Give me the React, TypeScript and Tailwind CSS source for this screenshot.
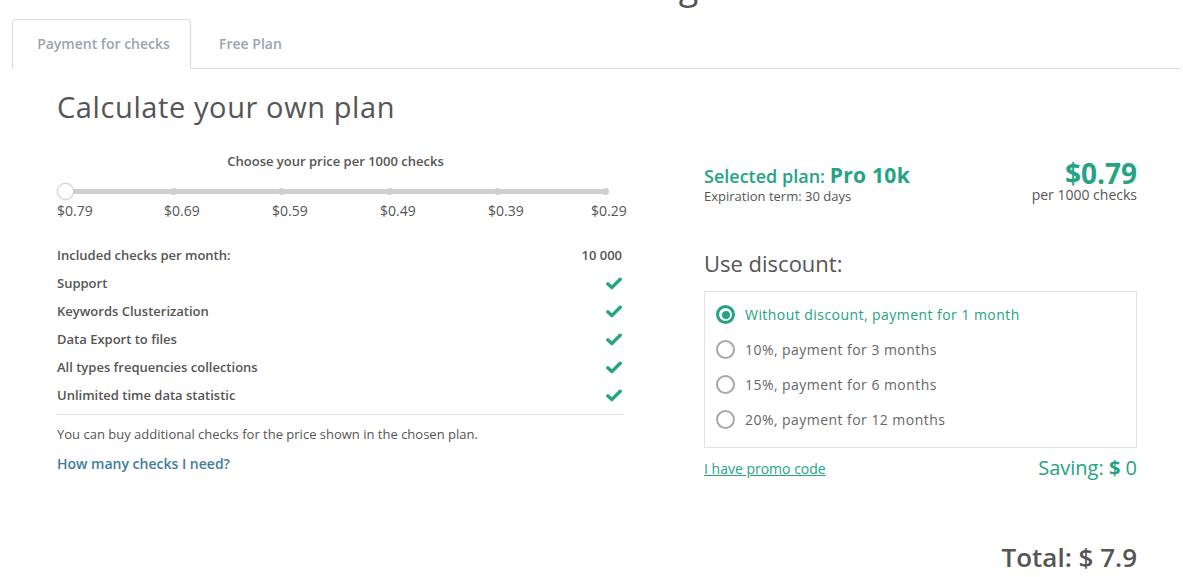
import React from "react";

function Check() {
  return (
    <svg width="16" height="13" viewBox="0 0 16 13" aria-hidden>
      <path d="M1.8 6.8 L5.8 10.6 L14.2 2.2" fill="none" stroke="#27a580" strokeWidth="3.4" strokeLinecap="round" strokeLinejoin="round" />
    </svg>
  );
}

function Radio({ checked }: { checked?: boolean }) {
  if (checked) {
    return (
      <span className="w-[19px] h-[19px] rounded-full border-[3px] border-[#25a383] flex items-center justify-center shrink-0">
        <span className="w-[8px] h-[8px] rounded-full bg-[#25a383]" />
      </span>
    );
  }
  return <span className="w-[19px] h-[19px] rounded-full border-[2.5px] border-[#a8a8a8] shrink-0" />;
}

export default function App() {
  const features = [
    "Support",
    "Keywords Clusterization",
    "Data Export to files",
    "All types frequencies collections",
    "Unlimited time data statistic",
  ];
  const options = [
    "Without discount, payment for 1 month",
    "10%, payment for 3 months",
    "15%, payment for 6 months",
    "20%, payment for 12 months",
  ];
  return (
    <div className="w-[1183px] h-[577px] overflow-hidden bg-white text-[#555]" style={{ fontFamily: '"Open Sans", "Noto Sans", sans-serif' }}>
      <div className="h-[19px] overflow-hidden">
        <div className="pl-[585px] text-[36px] leading-none -mt-[32px] text-[#555]">Pricing</div>
      </div>
      <div className="pl-[12px] pr-[3px]">
        <div className="flex border-b border-[#dcdcdc] h-[50px]">
          <div className="w-[179px] h-[50px] border border-b-0 border-[#dcdcdc] rounded-t-[4px] bg-white flex items-center justify-center pl-[4px] pb-[2px] text-[14px] font-semibold text-[#9aa4b1] -mb-px">
            Payment for checks
          </div>
          <div className="px-[28px] h-[49px] flex items-center text-[14px] font-semibold text-[#9aa4b1]">Free Plan</div>
        </div>
      </div>
      <div className="pl-[57px]">
        <h1 className="text-[29px] leading-none mt-[23px] text-[#555] tracking-[0.6px]">Calculate your own plan</h1>
        <div className="flex mt-[22px]">
          <div className="w-[571px]">
            <div className="text-center text-[13px] font-semibold pr-[14px] leading-[18px] mt-[9px]">Choose your price per 1000 checks</div>
            <div className="relative mt-[13px] h-[16px] w-[557px]">
              <div className="absolute left-[8px] right-[8px] top-[6px] h-[5px] rounded-full bg-[#cfcfcf]" />
              {[116, 224, 332, 440, 548].map((x) => (
                <div key={x} className="absolute top-[5px] w-[7px] h-[7px] rounded-full bg-[#cfcfcf]" style={{ left: x - 3 }} />
              ))}
              <div className="absolute left-0 top-0 w-[17px] h-[17px] rounded-full bg-white border border-[#cfcfcf] shadow-[0_0_2px_rgba(0,0,0,0.15)]" />
            </div>
            <div className="flex mt-[2px] text-[14px] leading-[20px] text-[#555]">
              <span className="w-[107px]">$0.79</span>
              <span className="w-[108px]">$0.69</span>
              <span className="w-[108px]">$0.59</span>
              <span className="w-[108px]">$0.49</span>
              <span className="w-[103px]">$0.39</span>
              <span>$0.29</span>
            </div>
            <div className="w-[566px] mt-[25px]">
              <div className="flex justify-between h-[28px] items-start text-[13px] font-semibold leading-[18px]">
                <span>Included checks per month:</span>
                <span className="pr-[1px]">10 000</span>
              </div>
              {features.map((f) => (
                <div key={f} className="flex justify-between h-[28px] items-start text-[13px] font-semibold leading-[18px]">
                  <span>{f}</span>
                  <span className="pr-[1px] pt-[3px]"><Check /></span>
                </div>
              ))}
              <div className="border-t border-[#e2e2e2]" />
              <div className="text-[13px] leading-[18px] mt-[10px]">You can buy additional checks for the price shown in the chosen plan.</div>
              <div className="text-[14px] font-semibold leading-[20px] mt-[11px] text-[#3f7d9a]">How many checks I need?</div>
            </div>
          </div>
          <div className="ml-[76px] w-[433px]">
            <div className="flex justify-between items-start mt-[19px]">
              <div>
                <div className="text-[#25a383] font-semibold leading-[26px]">
                  <span className="text-[18px]">Selected plan: </span>
                  <span className="text-[21px] font-bold tracking-[0.3px]">Pro 10k</span>
                </div>
                <div className="text-[13px] leading-[16px] -mt-[2px]">Expiration term: 30 days</div>
              </div>
              <div className="text-right">
                <div className="text-[28px] font-bold leading-[24px] text-[#25a383] mt-[-1px]">$0.79</div>
                <div className="text-[14px] leading-[18px] mt-[1px]">per 1000 checks</div>
              </div>
            </div>
            <div className="text-[22px] leading-[30px] mt-[44px]">Use discount:</div>
            <div className="border border-[#e3e3e3] mt-[13px] h-[157px] pt-[5px] pl-[11px]">
              {options.map((o, i) => (
                <div key={o} className="flex items-center gap-[10px] h-[35px]">
                  <Radio checked={i === 0} />
                  <span className={"text-[14px] tracking-[0.45px] " + (i === 0 ? "text-[#25a383]" : "text-[#666]")}>{o}</span>
                </div>
              ))}
            </div>
            <div className="flex justify-between items-center mt-[7px]">
              <span className="text-[14px] underline text-[#25a383]">I have promo code</span>
              <span className="text-[20px] text-[#25a383] leading-[26px]">
                Saving: <span className="font-bold">$</span> 0
              </span>
            </div>
            <div className="text-right text-[26px] font-semibold leading-[34px] mt-[59px] text-[#555]">Total: $ 7.9</div>
          </div>
        </div>
      </div>
    </div>
  );
}
